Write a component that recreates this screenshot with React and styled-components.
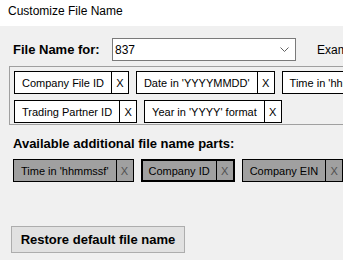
import React from 'react';
import styled, { createGlobalStyle } from 'styled-components';

const GlobalStyle = createGlobalStyle`
  html, body {
    margin: 0;
    padding: 0;
    background: #f0f0f0;
    overflow: hidden;
  }
  body {
    font-family: "Liberation Sans", Arial, sans-serif;
    color: #000;
  }
`;

const Window = styled.div`
  width: 343px;
  height: 260px;
  background: #f0f0f0;
  overflow: hidden;
  display: flex;
  flex-direction: column;
`;

const TitleBar = styled.div`
  height: 26px;
  flex: none;
  background: #fff;
  padding: 4px 0 0 8px;
  box-sizing: border-box;
  font-size: 12px;
  line-height: 15px;
  white-space: nowrap;
`;

const HeaderRow = styled.div`
  display: flex;
  align-items: center;
  margin: 12px 0 0 13px;
  height: 23px;
  white-space: nowrap;
`;

const BoldLabel = styled.div`
  font-size: 13px;
  font-weight: bold;
  line-height: 16px;
  white-space: nowrap;
  width: ${p => (p.$width ? `${p.$width}px` : 'auto')};
  flex: none;
`;

const Combo = styled.div`
  flex: none;
  width: 184px;
  height: 23px;
  box-sizing: border-box;
  border: 1px solid #7a7a7a;
  background: #fff;
  display: flex;
  align-items: center;
  justify-content: space-between;
  padding: 0 6px 0 2px;
  font-size: 12px;
`;

const Example = styled.div`
  margin-left: 21px;
  font-size: 12px;
  flex: none;
`;

const PartsPanel = styled.div`
  margin: 5px 0 0 9px;
  width: 520px;
  flex: none;
  border: 1px solid #a0a0a0;
  padding: 4px 4px 1px;
  display: flex;
  flex-direction: column;
  gap: 6px;
`;

const ChipRow = styled.div`
  display: flex;
  gap: 7px;
  margin: ${p => p.$top || 0}px 0 0 ${p => p.$indent || 0}px;
`;

const Chip = styled.div`
  flex: none;
  display: flex;
  height: 23px;
  box-sizing: border-box;
  border: ${p => (p.$selected ? '2px' : '1px')} solid #000;
  background: ${p => (p.$available ? '#a0a0a0' : '#fff')};
  font-size: 11px;
  white-space: nowrap;
`;

const ChipLabel = styled.div`
  display: flex;
  align-items: center;
  padding: 0 ${p => (p.$selected ? 6 : 7)}px;
  border-right: 1px solid #000;
`;

const ChipClose = styled.div`
  width: 16px;
  display: flex;
  align-items: center;
  justify-content: center;
  color: ${p => (p.$available ? '#505050' : '#000')};
`;

const AvailableLabel = styled(BoldLabel)`
  margin: 11px 0 0 13px;
`;

const RestoreButton = styled.button`
  margin: 44px 0 0 11px;
  align-self: flex-start;
  width: 174px;
  height: 27px;
  background: #e1e1e1;
  border: 1px solid #adadad;
  font-family: "Liberation Sans", Arial, sans-serif;
  font-size: 13px;
  font-weight: bold;
  color: #000;
  padding: 0;
`;

const selectedRows = [
  ['Company File ID', "Date in 'YYYYMMDD'", "Time in 'hhmmssf'"],
  ['Trading Partner ID', "Year in 'YYYY' format"],
];

const availableParts = ["Time in 'hhmmssf'", 'Company ID', 'Company EIN', 'Company Name'];

const Part = ({ label, available, selected }) => (
  <Chip $available={available} $selected={selected}>
    <ChipLabel $selected={selected}>{label}</ChipLabel>
    <ChipClose $available={available}>X</ChipClose>
  </Chip>
);

const Chevron = () => (
  <svg width="9" height="5" viewBox="0 0 9 5">
    <path d="M0.5 0.5 L4.5 4.5 L8.5 0.5" fill="none" stroke="#606060" strokeWidth="1" />
  </svg>
);

export default function App() {
  return (
    <Window>
      <GlobalStyle />
      <TitleBar>Customize File Name</TitleBar>
      <HeaderRow>
        <BoldLabel $width={99}>File Name for:</BoldLabel>
        <Combo>
          <span>837</span>
          <Chevron />
        </Combo>
        <Example>Example:</Example>
      </HeaderRow>
      <PartsPanel>
        {selectedRows.map((row, i) => (
          <ChipRow key={i}>
            {row.map(label => (
              <Part key={label} label={label} />
            ))}
          </ChipRow>
        ))}
      </PartsPanel>
      <AvailableLabel>Available additional file name parts:</AvailableLabel>
      <ChipRow $indent={13} $top={7}>
        {availableParts.map((label, i) => (
          <Part key={label} label={label} available selected={i === 1} />
        ))}
      </ChipRow>
      <RestoreButton>Restore default file name</RestoreButton>
    </Window>
  );
}
